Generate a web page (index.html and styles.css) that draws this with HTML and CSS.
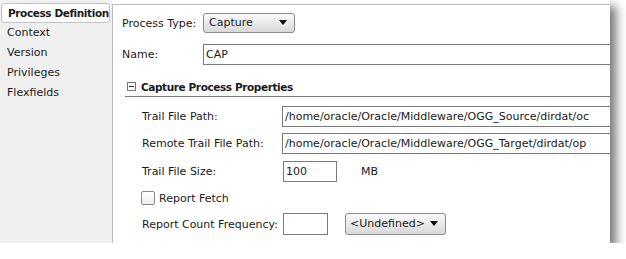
FILE: index.html
```html
<!DOCTYPE html>
<html lang="en">
<head>
    <meta charset="UTF-8">
    <title>Process Definition</title>
    <link rel="stylesheet" href="styles.css">
</head>
<body>
    <div class="window">
        <div class="sidebar">
            <div class="tab selected">Process Definition</div>
            <div class="tab">Context</div>
            <div class="tab">Version</div>
            <div class="tab">Privileges</div>
            <div class="tab">Flexfields</div>
        </div>
        <div class="panel">
            <div class="row row-type">
                <span class="label">Process Type:</span>
                <span class="select select-type">Capture<span class="arrow"></span></span>
            </div>
            <div class="row row-name">
                <span class="label">Name:</span>
                <span class="field wide">CAP</span>
            </div>
            <div class="section">
                <span class="toggle"></span>
                <span class="section-title">Capture Process Properties</span>
            </div>
            <div class="props">
                <div class="prow p1">
                    <span class="plabel">Trail File Path:</span>
                    <span class="field wide">/home/oracle/Oracle/Middleware/OGG_Source/dirdat/oc</span>
                </div>
                <div class="prow p2">
                    <span class="plabel">Remote Trail File Path:</span>
                    <span class="field wide">/home/oracle/Oracle/Middleware/OGG_Target/dirdat/op</span>
                </div>
                <div class="prow p3">
                    <span class="plabel">Trail File Size:</span>
                    <span class="field size">100</span>
                    <span class="unit">MB</span>
                </div>
                <div class="prow p4">
                    <span class="check"></span>
                    <span class="check-label">Report Fetch</span>
                </div>
                <div class="prow p5">
                    <span class="plabel">Report Count Frequency:</span>
                    <span class="field freq"></span>
                    <span class="select select-undef">&lt;Undefined&gt;<span class="arrow"></span></span>
                </div>
            </div>
        </div>
    </div>
</body>
</html>
```

FILE: styles.css
```css
body
{
    margin: 0;
    background-color: white;
    font-family: "DejaVu Sans", sans-serif;
    font-size: 11px;
    color: #1a1a1a;
}
.window
{
    width: 610px;
    height: 243px;
    display: flex;
    background-color: white;
    box-shadow: 6px 6px 10px rgba(0, 0, 0, 0.55);
    overflow: hidden;
}
.sidebar
{
    width: 112px;
    flex-shrink: 0;
    background-color: #f0f0f0;
    padding-top: 3px;
    box-sizing: border-box;
    white-space: nowrap;
}
.tab
{
    height: 20px;
    line-height: 20px;
    padding-left: 7px;
}
.tab.selected
{
    background-color: white;
    border: 1px solid #c4c4c4;
    border-radius: 3px;
    margin: 0 2px 0 1px;
    padding-left: 6px;
    height: 18px;
    line-height: 18px;
    font-weight: bold;
    font-size: 10.5px;
    letter-spacing: -0.4px;
    position: relative;
    z-index: 1;
}
.panel
{
    flex: 1;
    margin-top: 4px;
    border-top: 1px solid #bdbdbd;
    border-left: 1px solid #bdbdbd;
    padding-left: 9px;
    white-space: nowrap;
}
.row
{
    display: flex;
    align-items: center;
}
.row-type
{
    margin-top: 8px;
    height: 20px;
}
.row-name
{
    margin-top: 11px;
    height: 21px;
}
.label
{
    width: 81px;
    flex-shrink: 0;
}
.field
{
    display: inline-block;
    box-sizing: border-box;
    height: 21px;
    line-height: 19px;
    border: 1px solid #7b7b7b;
    padding-left: 2px;
    background-color: white;
    flex-shrink: 0;
}
.wide
{
    width: 420px;
}
.select
{
    display: inline-block;
    position: relative;
    box-sizing: border-box;
    height: 20px;
    line-height: 18px;
    border: 1px solid #8c8c8c;
    border-radius: 3px;
    background: linear-gradient(#fbfbfb, #e6e6e6 60%, #d8d8d8);
    padding-left: 5px;
    flex-shrink: 0;
}
.select-type
{
    width: 92px;
}
.arrow
{
    position: absolute;
    right: 7px;
    top: 6px;
    border-left: 4px solid transparent;
    border-right: 4px solid transparent;
    border-top: 5px solid black;
}
.section
{
    margin: 12px 0 0 3px;
    height: 19px;
    border-bottom: 1px solid #7b7b7b;
    display: flex;
    align-items: center;
}
.toggle
{
    width: 9px;
    height: 9px;
    box-sizing: border-box;
    border: 1px solid #777;
    margin-left: 2px;
    margin-right: 5px;
    position: relative;
}
.toggle::after
{
    content: "";
    position: absolute;
    left: 1px;
    right: 1px;
    top: 3px;
    height: 1px;
    background-color: #333;
}
.section-title
{
    font-weight: bold;
    font-size: 10.5px;
    letter-spacing: -0.4px;
}
.props
{
    padding-left: 20px;
}
.prow
{
    display: flex;
    align-items: center;
}
.plabel
{
    width: 140px;
    flex-shrink: 0;
}
.p1
{
    margin-top: 9px;
    height: 21px;
}
.p2
{
    margin-top: 6px;
    height: 21px;
}
.p3
{
    margin-top: 7px;
    height: 21px;
}
.size
{
    width: 54px;
    margin-left: 1px;
}
.unit
{
    margin-left: 24px;
}
.p4
{
    margin-top: 7px;
    height: 18px;
}
.check
{
    width: 14px;
    height: 14px;
    box-sizing: border-box;
    border: 1px solid #8a8a8a;
    border-radius: 2px;
    background: linear-gradient(#ffffff, #ececec);
    margin-left: -1px;
    margin-right: 4px;
}
.p5
{
    margin-top: 6px;
    height: 22px;
}
.freq
{
    width: 45px;
    height: 22px;
    margin-left: 1px;
}
.select-undef
{
    width: 101px;
    height: 22px;
    line-height: 20px;
    margin-left: 17px;
    padding-left: 4px;
}
.select-undef .arrow
{
    top: 7px;
}
```
